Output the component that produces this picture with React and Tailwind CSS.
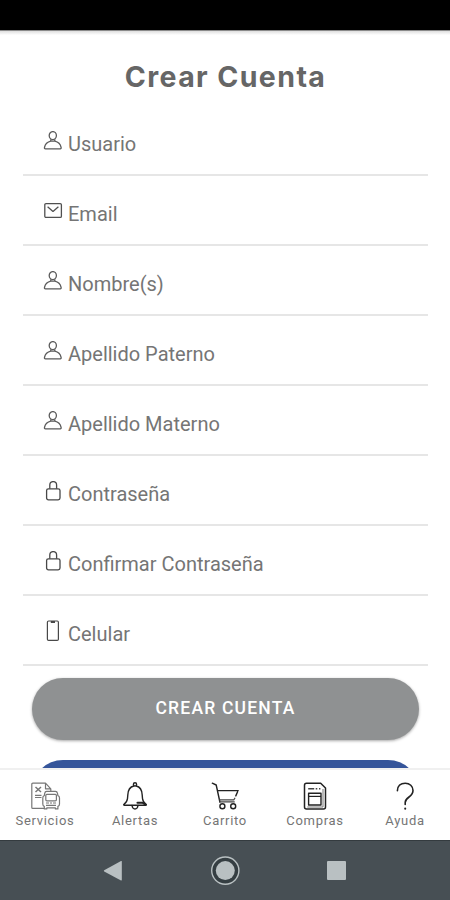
import React from 'react';

const UserIcon = () => (
  <svg className="w-5 h-5" viewBox="0 0 20 20" fill="none" stroke="#5a5a5a" strokeWidth="1.3" strokeLinejoin="round">
    <ellipse cx="9.8" cy="4.6" rx="3.6" ry="4" />
    <path d="M7.8 8.2v1.9C4.3 10.9 2.1 13.4 1.5 16.3q-.3 1.5.9 1.5h14.8q1.2 0 .9-1.5C17.5 13.4 15.3 10.9 11.8 10.1V8.2M7.8 10.1h4" />
  </svg>
);

const MailIcon = () => (
  <svg className="w-5 h-5" viewBox="0 0 20 20" fill="none" stroke="#505050" strokeWidth="1.3" strokeLinejoin="round">
    <rect x="1.8" y="2.6" width="16.6" height="13.8" rx="1.2" />
    <path d="M4.6 5.8l5.4 4.6 5.4-4.6" />
  </svg>
);

const LockIcon = () => (
  <svg className="w-5 h-5" viewBox="0 0 20 20" fill="none" stroke="#484848" strokeWidth="1.3">
    <rect x="3.6" y="7.8" width="13.4" height="11" rx="1.8" />
    <path d="M6.8 7.8V4a3.4 3.4 0 0 1 6.8 0v3.8" />
  </svg>
);

const PhoneIcon = () => (
  <svg className="w-5 h-5 overflow-visible" viewBox="0 0 20 20" fill="none" stroke="#484848" strokeWidth="1.2">
    <rect x="4.4" y="0" width="11" height="19.4" rx="1.2" />
    <path d="M7.8 1h4.2" strokeWidth="2" />
  </svg>
);

const ServicesIcon = () => (
  <svg className="w-8 h-8" viewBox="0 0 32 32" fill="none" stroke="#777" strokeWidth="1.2" strokeLinejoin="round">
    <path d="M15 27.4H3.8q-1 0-1-1V3.2q0-1 1-1h12.7l5.3 5.6v2.6M16.5 2.2v5.6h5.3" />
    <path d="M6.5 6l5.5 5M12 6l-5.5 5" strokeWidth="1.5" />
    <path d="M6 14.3h6.5M6 16.5h6.5" />
    <path d="M17.5 10.4h9q1.6 0 2 2l.4 2.3q1.6.3 1.6 2.3v6q0 2-1.6 2.4v2.5h-2.5v-1h-8.6v1h-2.5v-2.5q-1.5-.4-1.5-2.4v-6q0-2 1.5-2.3l.4-2.3q.4-2 1.8-2z" />
    <rect x="16.8" y="13.4" width="10.6" height="6.4" rx="1" />
    <path d="M17 22h3M24 22h3M17 24.3h10M21 22h2" strokeWidth="1.2" />
  </svg>
);

const BellIcon = () => (
  <svg className="w-8 h-8" viewBox="0 0 32 32" fill="none" stroke="#222" strokeWidth="1.4" strokeLinecap="round" strokeLinejoin="round">
    <circle cx="16" cy="3.4" r="1.6" />
    <path d="M14.8 5C10.6 5.9 9 9.3 8.8 14l-.3 3.5c-.3 3.2-1.8 4.5-3.5 5.7q-.8.9.2 1h21.6q1-.1.2-1c-1.7-1.2-3.2-2.5-3.5-5.7l-.3-3.5c-.2-4.7-1.8-8.1-6-9" />
    <path d="M13 24.5q.5 3.5 3 3.5t3-3.5" />
    <path d="M18.5 21.8h5.4l2.7 1.8" strokeWidth="2.1" />
  </svg>
);

const CartIcon = () => (
  <svg className="w-8 h-8" viewBox="0 0 32 32" fill="none" stroke="#222" strokeWidth="1.4" strokeLinecap="round" strokeLinejoin="round">
    <path d="M3.3 2.2l3.9 1.8 3.7 17" />
    <path d="M9 9.6h20.2M28.6 10.8l-1.8 4.1" />
    <path d="M10.6 18.9h14.2l1.1-1.8M10.9 20.9h14.4" strokeWidth="1.1" stroke="#444" />
    <circle cx="13.4" cy="25.2" r="2.5" />
    <circle cx="24.2" cy="25.2" r="2.5" />
  </svg>
);

const ReceiptIcon = () => (
  <svg className="w-8 h-8" viewBox="0 0 32 32" fill="none" stroke="#222" strokeWidth="1.5" strokeLinejoin="round">
    <path d="M7.5 2.2h14.2l4.8 4.8v19q0 2-2 2h-17q-2 0-2-2V4.2q0-2 2-2z" />
    <path d="M24 8v18H8.3" stroke="#777" strokeWidth="1" />
    <rect x="9.6" y="12.2" width="12.4" height="11.8" strokeWidth="1.4" />
    <path d="M9.6 15.4H22" strokeWidth="1.2" />
    <path d="M9.2 7.8h6M16.7 7.8h1.6M20 7.8h1.4" strokeWidth="1.6" stroke="#444" />
  </svg>
);

const HelpIcon = () => (
  <svg className="w-8 h-8" viewBox="0 0 32 32" fill="none" stroke="#222" strokeWidth="1.6" strokeLinecap="round">
    <path d="M8.4 9.8C8.4 5 11.7 2.2 16.2 2.2s7.8 3 7.8 7.2c0 3.4-1.9 5-4 6.6-2.4 1.8-3.8 2.9-3.8 5.4v2" />
    <path d="M16.2 27.6v.2" strokeWidth="2" />
  </svg>
);

const fields = [
  { label: 'Usuario', icon: UserIcon },
  { label: 'Email', icon: MailIcon },
  { label: 'Nombre(s)', icon: UserIcon },
  { label: 'Apellido Paterno', icon: UserIcon },
  { label: 'Apellido Materno', icon: UserIcon },
  { label: 'Contraseña', icon: LockIcon },
  { label: 'Confirmar Contraseña', icon: LockIcon },
  { label: 'Celular', icon: PhoneIcon },
];

const tabs = [
  { label: 'Servicios', icon: ServicesIcon },
  { label: 'Alertas', icon: BellIcon },
  { label: 'Carrito', icon: CartIcon },
  { label: 'Compras', icon: ReceiptIcon },
  { label: 'Ayuda', icon: HelpIcon },
];

export default function App() {
  return (
    <div className="w-[450px] h-[900px] flex flex-col overflow-hidden bg-white font-['Roboto',sans-serif]">
      <div className="h-[30px] shrink-0 bg-black" />

      <main className="flex-1 min-h-0 overflow-hidden border-t border-[#8a8a8a]">
        <div className="h-1 bg-linear-to-b from-[#dedede] to-white" />
        <h1 className="h-[71px] pl-px pt-6 text-center text-[28.5px] leading-9 font-bold tracking-[1.4px] text-[#666] font-['Inter',sans-serif]">
          Crear Cuenta
        </h1>

        <form className="px-[23px]">
          {fields.map(({ label, icon: Icon }) => (
            <label key={label} className="h-[70px] mr-[-1px] pl-5 pt-[25px] flex items-start gap-[5px] border-b-2 border-[#e6e6e6]">
              <Icon />
              <span className="pt-px text-[20px] leading-6 text-[#757575]">{label}</span>
            </label>
          ))}
        </form>

        <div className="px-8 pt-3 flex flex-col gap-5">
          <button className="h-[62px] pb-px mr-[-1px] rounded-full bg-[#8f9192] text-white text-[17.5px] font-medium tracking-[1.2px] shadow-[0_1px_3px_rgba(0,0,0,0.35)]">
            CREAR CUENTA
          </button>
          <button className="h-[62px] mr-[-1px] rounded-full bg-[#35559a]" />
        </div>
      </main>

      <nav className="h-[72px] shrink-0 grid grid-cols-5 bg-white border-t-2 border-[#f0f0f0]">
        {tabs.map(({ label, icon: Icon }) => (
          <button key={label} className="flex flex-col items-center pt-[11px]">
            <Icon />
            <span className="text-[13px] leading-4 tracking-[0.7px] text-[#757575]">{label}</span>
          </button>
        ))}
      </nav>

      <div className="h-[60px] shrink-0 grid grid-cols-[1fr_112px_1fr] items-center bg-[#474f54] border-t border-[#343b3f]">
        <svg className="w-5 h-6 ml-[103px]" viewBox="0 0 20 24" fill="#b9c0c2">
          <path d="M1.2 11.2L18 2q.8-.3.8.6v18.2q0 .9-.8.6L1.2 12.4q-.8-.6 0-1.2z" />
        </svg>
        <svg className="w-8 h-8 mx-auto" viewBox="0 0 32 32">
          <circle cx="16.3" cy="15.6" r="13.6" fill="#353e42" stroke="#b9c0c2" strokeWidth="1.4" />
          <circle cx="16.3" cy="15.6" r="9.5" fill="#b9c0c2" />
        </svg>
        <div className="w-[19px] h-[19px] ml-[46px] rounded-[1px] bg-[#b9c0c2]" />
      </div>
    </div>
  );
}
